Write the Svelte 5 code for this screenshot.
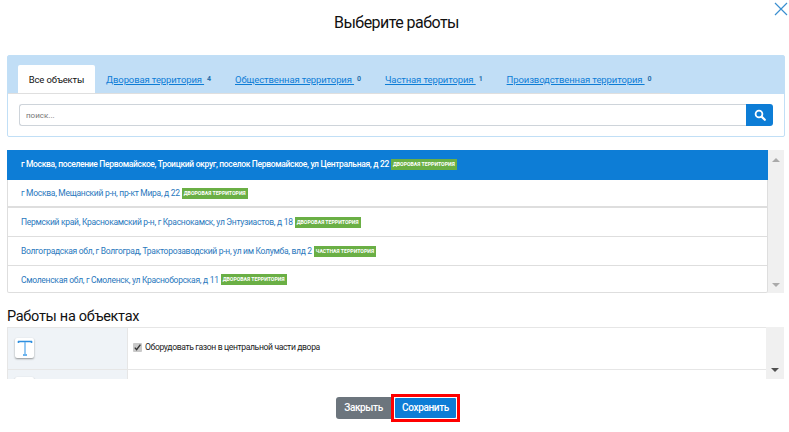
<script lang="ts">
	type Place = { address: string; kind: string };

	const tabs = [
		{ label: 'Дворовая территория', count: 4 },
		{ label: 'Общественная территория', count: 0 },
		{ label: 'Частная территория', count: 1 },
		{ label: 'Производственная территория', count: 0 }
	];

	const places: Place[] = [
		{ address: 'г Москва, поселение Первомайское, Троицкий округ, поселок Первомайское, ул Центральная, д 22', kind: 'Дворовая территория' },
		{ address: 'г Москва, Мещанский р-н, пр-кт Мира, д 22', kind: 'Дворовая территория' },
		{ address: 'Пермский край, Краснокамский р-н, г Краснокамск, ул Энтузиастов, д 18', kind: 'Дворовая территория' },
		{ address: 'Волгоградская обл, г Волгоград, Тракторозаводский р-н, ул им Колумба, влд 2', kind: 'Частная территория' },
		{ address: 'Смоленская обл, г Смоленск, ул Красноборская, д 11', kind: 'Дворовая территория' }
	];
</script>

<div class="modal">
	<header class="modal-head">
		<h1>Выберите работы</h1>
		<button class="close" type="button" aria-label="Закрыть">
			<svg width="14" height="14" viewBox="0 0 14 14" aria-hidden="true">
				<path d="M1 1 L13 13 M13 1 L1 13" stroke="#3a8fd0" stroke-width="1.2" fill="none" />
			</svg>
		</button>
	</header>

	<section class="filter">
		<div class="tabs">
			<nav class="tab-strip">
				<span class="tab active">Все объекты</span>
				{#each tabs as tab}
					<span class="tab">
						<a href="#top">{tab.label}&nbsp;</a>
						<b>{tab.count}</b>
					</span>
				{/each}
			</nav>
		</div>
		<div class="search">
			<input type="text" placeholder="поиск..." />
			<button type="button" aria-label="Искать">
				<svg width="12" height="12" viewBox="0 0 12 12" aria-hidden="true">
					<circle cx="5" cy="5" r="3.4" stroke="#fff" stroke-width="1.8" fill="none" />
					<path d="M7.6 7.6 L10.8 10.8" stroke="#fff" stroke-width="2.2" stroke-linecap="round" />
				</svg>
			</button>
		</div>
	</section>

	<section class="places">
		<ul>
			{#each places as place, index}
				<li class:selected={index === 0} class:thick={index === 1}>
					<span>{place.address}</span>
					<em>{place.kind}</em>
				</li>
			{/each}
		</ul>
		<div class="scrollbar">
			<i class="up"></i>
			<i class="down"></i>
		</div>
	</section>

	<h2>Работы на объектах</h2>

	<section class="works">
		<div class="works-table">
			<div class="work-row">
				<div class="work-icon">
					<span class="tile">
						<svg width="18" height="18" viewBox="0 0 18 18" aria-hidden="true">
							<path d="M2 2.5 H16 M2.5 2 V4 M15.5 2 V4" stroke="#2f8fe0" stroke-width="1.6" />
							<path d="M9 3 V16" stroke="#6db4ee" stroke-width="1.4" />
							<path d="M7 16 H11" stroke="#6db4ee" stroke-width="2" />
						</svg>
					</span>
				</div>
				<div class="work-text">
					<span class="check">
						<svg width="9" height="9" viewBox="0 0 9 9" aria-hidden="true">
							<path d="M1.8 4.6 L3.6 6.6 L7.4 1.6" stroke="#333" stroke-width="1.4" fill="none" />
						</svg>
					</span>
					Оборудовать газон в центральной части двора
				</div>
			</div>
			<div class="work-row">
				<div class="work-icon">
					<span class="tile">
						<svg width="18" height="18" viewBox="0 0 18 18" aria-hidden="true">
							<path d="M2 2.5 H16" stroke="#2f8fe0" stroke-width="2" stroke-dasharray="3 1" />
						</svg>
					</span>
				</div>
				<div class="work-text"></div>
			</div>
		</div>
		<div class="scrollbar">
			<i class="down dark"></i>
		</div>
	</section>

	<footer class="actions">
		<button class="btn grey" type="button">Закрыть</button>
		<span class="highlight">
			<button class="btn blue" type="button">Сохранить</button>
		</span>
	</footer>
</div>

<style>
	:global(body) {
		background: #fff;
		font-family: Roboto, 'Liberation Sans', sans-serif;
	}

	.modal {
		box-sizing: border-box;
		height: 432px;
		overflow: hidden;
		padding: 0 4px 0 7px;
		width: 789px;
	}

	.modal-head {
		align-items: center;
		display: flex;
		height: 44px;
		justify-content: center;
		margin-bottom: 11px;
		position: relative;
	}

	h1 {
		color: #111;
		font-size: 16px;
		font-weight: 400;
		letter-spacing: -0.55px;
		margin: 0;
		padding-left: 1px;
	}

	.close {
		background: none;
		border: 0;
		height: 14px;
		padding: 0;
		position: absolute;
		right: -3px;
		top: 2px;
		width: 14px;
	}

	.filter {
		border: 1px solid #c1dff6;
		border-radius: 2px;
		box-sizing: border-box;
		height: 82px;
	}

	.tabs {
		background: #c1def6;
		height: 38px;
	}

	.tab-strip {
		border-bottom: 1px solid #dfdfdf;
		box-sizing: border-box;
		display: flex;
		font-size: 9.5px;
		height: 38px;
		letter-spacing: -0.12px;
		padding: 9px 0 0 10px;
		width: 662px;
	}

	.tab {
		align-items: center;
		display: flex;
		flex: none;
		gap: 3px;
		margin-right: 24px;
		white-space: nowrap;
	}

	.tab a {
		color: #0d7dd6;
		text-decoration: underline;
	}

	.tab b {
		color: #2a6ea8;
		font-size: 7px;
		font-weight: 700;
	}

	.tab.active {
		background: #fff;
		border-radius: 2px 2px 0 0;
		color: #111;
		justify-content: center;
		margin-right: 11px;
		width: 77px;
	}

	.search {
		display: flex;
		height: 22px;
		margin: 10px 11px 0;
	}

	.search input {
		border: 1px solid #ced4da;
		border-right: 0;
		border-radius: 3px 0 0 3px;
		box-sizing: border-box;
		flex: 1;
		font: inherit;
		font-size: 8px;
		height: 100%;
		min-width: 0;
		outline: 0;
		padding: 0 6px;
	}

	.search input::placeholder {
		color: #777;
		opacity: 1;
	}

	.search button {
		align-items: center;
		background: #0d7dd6;
		border: 0;
		border-radius: 0 3px 3px 0;
		display: flex;
		justify-content: center;
		padding: 0;
		width: 27px;
	}

	.places {
		display: flex;
		height: 143px;
		margin: 13px 1px 0 0;
	}

	.places ul {
		border-bottom: 1px solid #dedede;
		border-left: 1px solid #dedede;
		border-right: 1px solid #dedede;
		border-radius: 2px;
		box-sizing: border-box;
		flex: 1;
		list-style: none;
		margin: 0;
		min-width: 0;
		padding: 0;
	}

	.places li {
		align-items: center;
		border-bottom: 1px solid #dedede;
		box-sizing: border-box;
		color: #2a78bd;
		display: flex;
		font-size: 8.5px;
		gap: 2px;
		height: 29px;
		letter-spacing: -0.29px;
		padding: 0 0 0 13px;
		white-space: nowrap;
	}

	.places li:last-child {
		border-bottom: 0;
		height: 27px;
	}

	.places li.selected {
		background: #0d7dd6;
		border-bottom: 0;
		color: #fff;
		font-weight: 500;
		height: 30px;
		letter-spacing: -0.33px;
		margin: 0 -1px;
		padding: 0 0 2px 14px;
	}

	.places li.thick {
		border-bottom-width: 2px;
		height: 28px;
	}

	.places em {
		background: #6aaf45;
		color: #fff;
		font-size: 5.2px;
		font-style: normal;
		font-weight: 700;
		letter-spacing: 0;
		line-height: 11px;
		padding: 0 2px;
		text-transform: uppercase;
	}

	.scrollbar {
		align-items: center;
		background: #f0f0f0;
		display: flex;
		flex: none;
		flex-direction: column;
		justify-content: space-between;
		padding: 8px 0 6px;
		width: 16px;
	}

	.scrollbar i {
		border-left: 4px solid transparent;
		border-right: 4px solid transparent;
		display: block;
		height: 0;
		width: 0;
	}

	.scrollbar .up {
		border-bottom: 4px solid #aaa;
	}

	.scrollbar .down {
		border-top: 4px solid #aaa;
	}

	.scrollbar .dark {
		border-top-color: #505050;
	}

	h2 {
		color: #111;
		font-size: 14.5px;
		font-weight: 400;
		letter-spacing: -0.3px;
		line-height: 18px;
		margin: 15px 0 0;
	}

	.works {
		display: flex;
		height: 52px;
		margin: 1px 1px 0 0;
		overflow: hidden;
	}

	.works .scrollbar {
		justify-content: flex-end;
		padding: 0 0 7px;
		width: 18px;
	}

	.works-table {
		border-top: 1px solid #e6e6e6;
		flex: 1;
		min-width: 0;
	}

	.work-row {
		border-bottom: 1px solid #e6e6e6;
		display: flex;
		height: 41px;
	}

	.work-icon {
		background: #eff3f7;
		border-left: 1px solid #e6e6e6;
		border-right: 1px solid #e6e6e6;
		box-sizing: border-box;
		flex: none;
		padding: 10px 0 0 7px;
		width: 121px;
	}

	.work-row + .work-row .work-icon {
		padding-top: 7px;
	}

	.tile {
		align-items: center;
		background: #fff;
		border-radius: 2px;
		box-shadow: 0 1px 2px rgba(0, 0, 0, 0.4);
		display: flex;
		height: 20px;
		justify-content: center;
		width: 19px;
	}

	.work-text {
		align-items: center;
		color: #222;
		display: flex;
		flex: 1;
		font-size: 8.6px;
		gap: 3px;
		letter-spacing: -0.37px;
		padding: 0 0 3px 5px;
	}

	.check {
		background: #c9c9c9;
		border-radius: 1px;
		display: block;
		height: 9px;
		width: 9px;
	}

	.check svg {
		display: block;
	}

	.actions {
		align-items: center;
		display: flex;
		height: 31px;
		justify-content: center;
		margin-top: 13px;
		padding-left: 4px;
	}

	.btn {
		border: 1px solid transparent;
		color: #fff;
		font: inherit;
		font-size: 10px;
		font-weight: 500;
		height: 22px;
		letter-spacing: -0.35px;
		padding: 0;
	}

	.grey {
		background: #6c757d;
		border-radius: 3px 0 0 3px;
		width: 55px;
	}

	.blue {
		background: #0d7dd6;
		border-color: #fff;
		border-radius: 2px;
		display: block;
		width: 63px;
	}

	.highlight {
		border: 3px solid #f00;
		display: block;
	}
</style>
